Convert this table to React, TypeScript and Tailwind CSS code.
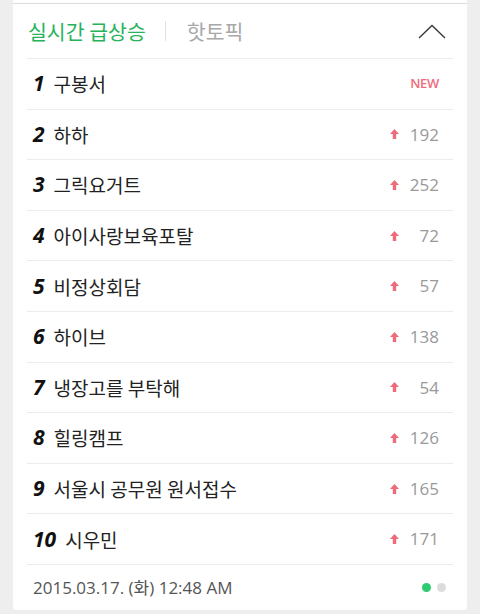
import React from 'react';

type Item = { rank: number; keyword: string; change: number | 'NEW' };

const items: Item[] = [
  { rank: 1, keyword: '구봉서', change: 'NEW' },
  { rank: 2, keyword: '하하', change: 192 },
  { rank: 3, keyword: '그릭요거트', change: 252 },
  { rank: 4, keyword: '아이사랑보육포탈', change: 72 },
  { rank: 5, keyword: '비정상회담', change: 57 },
  { rank: 6, keyword: '하이브', change: 138 },
  { rank: 7, keyword: '냉장고를 부탁해', change: 54 },
  { rank: 8, keyword: '힐링캠프', change: 126 },
  { rank: 9, keyword: '서울시 공무원 원서접수', change: 165 },
  { rank: 10, keyword: '시우민', change: 171 },
];

const kr = { fontFamily: '"Noto Sans CJK KR", "Noto Sans", sans-serif' };
const latin = { fontFamily: '"Open Sans", "Noto Sans CJK KR", sans-serif' };

const UpArrow = () => (
  <svg width="9" height="10" viewBox="0 0 9 10" className="shrink-0">
    <path d="M4.5 0 L9 5 L6.2 5 L6.2 10 L2.8 10 L2.8 5 L0 5 Z" fill="#ef6b7b" />
  </svg>
);

const Row = ({ item }: { item: Item }) => (
  <li className="flex items-center h-[50.6px] border-t border-[#ececec] pl-[6px] pr-[14px]">
    <span
      className="text-[21px] font-bold italic text-[#111] leading-none mr-[9px]"
      style={{ fontFamily: '"Noto Sans", "DejaVu Sans", sans-serif' }}
    >
      {item.rank}
    </span>
    <span className="text-[19px] text-[#222] leading-none" style={kr}>
      {item.keyword}
    </span>
    <span className="ml-auto flex items-center">
      {item.change === 'NEW' ? (
        <span className="text-[13px] font-semibold text-[#ef6b7b] tracking-tight" style={latin}>
          NEW
        </span>
      ) : (
        <>
          <UpArrow />
          <span className="w-[40px] text-right text-[17px] text-[#999]" style={latin}>
            {item.change}
          </span>
        </>
      )}
    </span>
  </li>
);

export default function App() {
  return (
    <div className="w-[480px] h-[614px] bg-[#eeeeee] overflow-hidden">
      <div className="mx-[13px] bg-white rounded-b-[4px]">
        <div className="h-[3px]" />
        <div className="border-t border-[#dcdcdc]" />
        <div className="px-[14px]">
          <div className="flex items-center h-[54px] pl-[1px] pr-[7px]">
            <span className="text-[20.5px] text-[#27b25c] leading-none" style={kr}>
              실시간 급상승
            </span>
            <span className="ml-[19px] mr-[21px] w-px h-[20px] bg-[#e2e2e2]" />
            <span className="text-[20.5px] text-[#a8a8a8] leading-none" style={kr}>
              핫토픽
            </span>
            <svg width="28" height="15" viewBox="0 0 28 15" className="ml-auto">
              <path d="M1 14 L14 1.5 L27 14" fill="none" stroke="#3a3a3a" strokeWidth="1.4" />
            </svg>
          </div>
          <ul>
            {items.map((item) => (
              <Row key={item.rank} item={item} />
            ))}
          </ul>
          <div className="flex items-center h-[46px] border-t border-[#ececec] pl-[6px] pr-[7px]">
            <span className="text-[17px] text-[#555]" style={latin}>
              2015.03.17. (화) 12:48 AM
            </span>
            <span className="ml-auto flex items-center gap-[6px]">
              <span className="w-[9px] h-[9px] rounded-full bg-[#2ecc71]" />
              <span className="w-[9px] h-[9px] rounded-full bg-[#dcdcdc]" />
            </span>
          </div>
        </div>
      </div>
    </div>
  );
}
